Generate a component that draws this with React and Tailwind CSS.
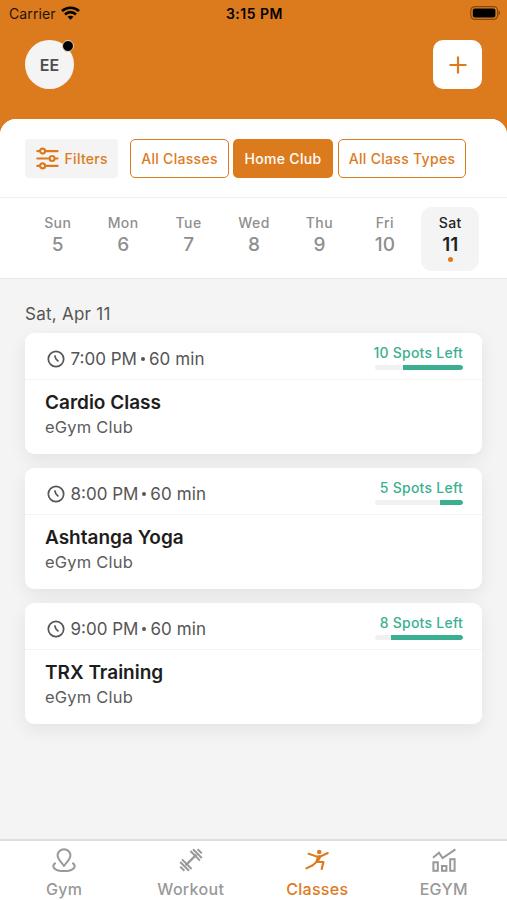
const DAYS = [
  { name: 'Sun', date: 5 },
  { name: 'Mon', date: 6 },
  { name: 'Tue', date: 7 },
  { name: 'Wed', date: 8 },
  { name: 'Thu', date: 9 },
  { name: 'Fri', date: 10 },
  { name: 'Sat', date: 11, active: true },
]

const CLASSES = [
  { time: '7:00 PM', duration: '60 min', title: 'Cardio Class', club: 'eGym Club', spots: 10, fill: 68 },
  { time: '8:00 PM', duration: '60 min', title: 'Ashtanga Yoga', club: 'eGym Club', spots: 5, fill: 26 },
  { time: '9:00 PM', duration: '60 min', title: 'TRX Training', club: 'eGym Club', spots: 8, fill: 82 },
]

const TABS = [
  { label: 'Gym', Icon: GymIcon },
  { label: 'Workout', Icon: DumbbellIcon },
  { label: 'Classes', Icon: ClassesIcon, active: true },
  { label: 'EGYM', Icon: ChartIcon },
]

function WifiIcon() {
  return (
    <svg width="19" height="14" viewBox="0 0 19 14" fill="none" stroke="black" strokeWidth="2.7">
      <path d="M1 5.1C5.8 0.6 13.2 0.6 18 5.1" />
      <path d="M4 8.4C7.2 5.4 11.8 5.4 15 8.4" />
      <path d="M9.5 13.8L6.5 10.8C8.2 9.3 10.8 9.3 12.5 10.8Z" fill="black" stroke="none" />
    </svg>
  )
}

function BatteryIcon() {
  return (
    <svg width="31" height="14" viewBox="0 0 31 14">
      <rect x="0.8" y="0.6" width="26.8" height="12.8" rx="4" fill="none" stroke="black" strokeOpacity="0.4" strokeWidth="1.2" />
      <rect x="2.8" y="2.4" width="22.6" height="9.2" rx="2" fill="black" />
      <path d="M28.6 4.6C30.4 5.4 30.4 8.6 28.6 9.4Z" fill="black" fillOpacity="0.5" />
    </svg>
  )
}

function FiltersIcon() {
  return (
    <svg width="23" height="23" viewBox="0 0 23 23" fill="none" stroke="currentColor" strokeWidth="2.1" strokeLinecap="round">
      <path d="M1.3 4.1H4M9.2 4.1H21.6M1.3 11.5H13.4M18.8 11.5H21.6M1.3 18.9H4M9.2 18.9H21.6" />
      <circle cx="6.6" cy="4.1" r="2.5" />
      <circle cx="16.1" cy="11.5" r="2.5" />
      <circle cx="6.6" cy="18.9" r="2.5" />
    </svg>
  )
}

function ClockIcon() {
  return (
    <svg width="18" height="18" viewBox="0 0 18 18" fill="none" stroke="#555" strokeWidth="1.7" strokeLinecap="round" strokeLinejoin="round">
      <circle cx="9" cy="9" r="7.7" />
      <path d="M7.9 6L9 9L10.9 10.8" />
    </svg>
  )
}

function GymIcon() {
  return (
    <svg width="24" height="24" viewBox="0 0 24 24" fill="none" stroke="currentColor" strokeWidth="2" strokeLinecap="round" strokeLinejoin="round">
      <path d="M12 18C9.6 14.6 5.6 11.2 5.6 7.5A6.4 6.3 0 0 1 18.4 7.5C18.4 11.2 14.4 14.6 12 18Z" />
      <path d="M3 15.4C-1.2 18.6 2.6 23 12 23S25.2 18.6 21 15.4" />
    </svg>
  )
}

function DumbbellIcon() {
  return (
    <svg width="24" height="24" viewBox="0 0 24 24" fill="none" stroke="currentColor" strokeWidth="2">
      <path d="M6.6 17.4L17.4 6.6" strokeWidth="2.2" />
      <path d="M11.4 3L21 12.6M14 1.2L22.8 10M18.6 1.2L22.8 5.4" />
      <path d="M3 11.4L12.6 21M1.2 14L10 22.8M1.2 18.6L5.4 22.8" />
    </svg>
  )
}

function ClassesIcon() {
  return (
    <svg width="24" height="24" viewBox="0 0 24 24" fill="none" stroke="currentColor" strokeLinecap="round" strokeLinejoin="round">
      <circle cx="14.2" cy="4" r="2.3" fill="currentColor" stroke="none" />
      <path d="M3.6 5.8L12 8.6L16.4 8L22.8 5" strokeWidth="2" />
      <path d="M12.6 8.6L16 8.3L13 13.4L11 14Z" fill="currentColor" strokeWidth="1.4" />
      <path d="M11.4 14L7.8 17.2L1.4 20.4" strokeWidth="2.1" />
      <path d="M12.2 13.8L18.4 14L16.7 21" strokeWidth="2.2" />
    </svg>
  )
}

function ChartIcon() {
  return (
    <svg width="24" height="24" viewBox="0 0 24 24" fill="none" stroke="currentColor" strokeWidth="2">
      <path d="M1 9.8L7 4.8L10.6 10L23.4 1.4" />
      <rect x="1.4" y="14.3" width="4.4" height="8.5" />
      <rect x="10" y="18" width="4.4" height="4.8" />
      <rect x="18.2" y="11.2" width="4.4" height="11.6" />
    </svg>
  )
}

function StatusBar() {
  return (
    <div className="grid h-[26px] grid-cols-3 items-center pl-[8px] pr-[6px] text-[14px] text-[#1f1305]">
      <div className="flex items-center gap-[5px]">
        <span className="pl-px tracking-[0.1px]">Carrier</span>
        <WifiIcon />
      </div>
      <span className="text-center font-semibold tracking-[0.5px] text-black">3:15 PM</span>
      <div className="flex justify-end">
        <BatteryIcon />
      </div>
    </div>
  )
}

function DayCell({ day }) {
  return (
    <div className={`mx-auto flex h-[64px] w-[58px] flex-col items-center rounded-[11px] pt-[5px] ${day.active ? 'bg-[#f4f4f4] text-[#222]' : 'text-[#8f8f8f]'}`}>
      <span className="text-[14px] leading-[21px] font-medium tracking-[0.4px]">{day.name}</span>
      <span className={`text-[19px] leading-[24px] ${day.active ? 'font-semibold' : 'font-medium'}`}>{day.date}</span>
      {day.active && <span className="h-[5px] w-[5px] rounded-full bg-[#dc7b1e]" />}
    </div>
  )
}

function ClassCard({ item }) {
  return (
    <div className="h-[121px] rounded-[9px] bg-white shadow-[0_6px_18px_rgba(0,0,0,0.07)]">
      <div className="flex h-[47px] items-start justify-between border-b border-[#f3f3f3] pr-[19px] pl-[21.5px]">
        <div className="flex items-center pt-[14px] text-[17px] leading-[24px] text-[#555]">
          <ClockIcon />
          <span className="ml-[6px]">{item.time}</span>
          <span className="mx-[4px] h-[4px] w-[4px] rounded-full bg-[#555]" />
          <span className="tracking-[0.1px]">{item.duration}</span>
        </div>
        <div className="flex flex-col items-end pt-[10px] text-[#3bb08f]">
          <span className="text-[14px] leading-[20px] font-medium tracking-[0.25px]">{item.spots} Spots Left</span>
          <div className="mt-[2px] flex h-[5px] w-[88px] justify-end overflow-hidden rounded-full bg-[#f1f1f1]">
            <div className="h-full rounded-r-full bg-[#3bae90]" style={{ width: `${item.fill}%` }} />
          </div>
        </div>
      </div>
      <div className="px-[20px] pt-[9px]">
        <h2 className="text-[19px] leading-[27px] font-semibold text-[#1d1d1d]">{item.title}</h2>
        <p className="text-[16.5px] leading-[23px] tracking-[0.2px] text-[#5c5c5c]">{item.club}</p>
      </div>
    </div>
  )
}

export default function App() {
  return (
    <div className="flex h-[900px] w-[507px] flex-col overflow-hidden bg-[#dc7b1e] font-['Inter',sans-serif]">
      <StatusBar />
      <header className="flex h-[93px] shrink-0 items-start justify-between px-[25px] pt-[14px]">
        <div className="relative flex h-[49px] w-[49px] items-center justify-center rounded-full bg-[#f4f4f4] text-[16px] font-semibold text-[#4d4d4d]">
          EE
          <span className="absolute top-0 right-0 h-[12px] w-[12px] rounded-full border border-[#f1d3b4] bg-black" />
        </div>
        <button className="flex h-[49px] w-[49px] items-center justify-center rounded-[10px] bg-white text-[#dc7b1e]">
          <svg width="18" height="18" viewBox="0 0 18 18" stroke="currentColor" strokeWidth="2.2">
            <path d="M9 0.5V17.5M0.5 9H17.5" />
          </svg>
        </button>
      </header>

      <main className="flex flex-1 flex-col overflow-hidden rounded-t-[16px] bg-[#f4f4f4]">
        {/* Filters */}
        <div className="flex h-[79px] shrink-0 items-start border-b border-[#f1f1f1] bg-white pt-[20px] pl-[25px] text-[14px] font-medium tracking-[0.3px] text-[#dc7b1e]">
          <button className="flex h-[39px] w-[93px] items-center gap-[6px] rounded-[4px] bg-[#f4f4f4] pl-[10.5px]">
            <FiltersIcon />
            Filters
          </button>
          <button className="ml-[12px] h-[39px] w-[99px] rounded-[5px] border border-[#dc7b1e]">All Classes</button>
          <button className="ml-[4px] h-[39px] w-[100px] rounded-[5px] bg-[#dc7b1e] text-white">Home Club</button>
          <button className="ml-[5px] h-[39px] w-[128px] rounded-[5px] border border-[#dc7b1e]">All Class Types</button>
        </div>

        {/* Week strip */}
        <div className="grid h-[81px] shrink-0 grid-cols-7 border-b border-[#e6e6e6] bg-white pt-[9px] pr-[24px] pl-[25px]">
          {DAYS.map((day) => (
            <DayCell key={day.name} day={day} />
          ))}
        </div>

        <section className="flex-1 px-[25px] pt-[24px]">
          <h1 className="text-[17px] leading-[22px] tracking-[0.25px] text-[#555]">Sat, Apr 11</h1>
          <div className="mt-[8px] flex flex-col gap-[14px]">
            {CLASSES.map((item) => (
              <ClassCard key={item.time} item={item} />
            ))}
          </div>
        </section>
      </main>

      <nav className="grid h-[61px] shrink-0 grid-cols-4 border-t-2 border-[#dedede] bg-white pl-px">
        {TABS.map(({ label, Icon, active }) => (
          <div key={label} className={`flex flex-col items-center pt-[7px] text-[16px] font-medium tracking-[0.3px] ${active ? 'text-[#dc7b1e]' : 'text-[#999]'}`}>
            <div className="flex h-[24px] items-center">
              <Icon />
            </div>
            <span className="mt-[6px] leading-[22px]">{label}</span>
          </div>
        ))}
      </nav>
    </div>
  )
}
